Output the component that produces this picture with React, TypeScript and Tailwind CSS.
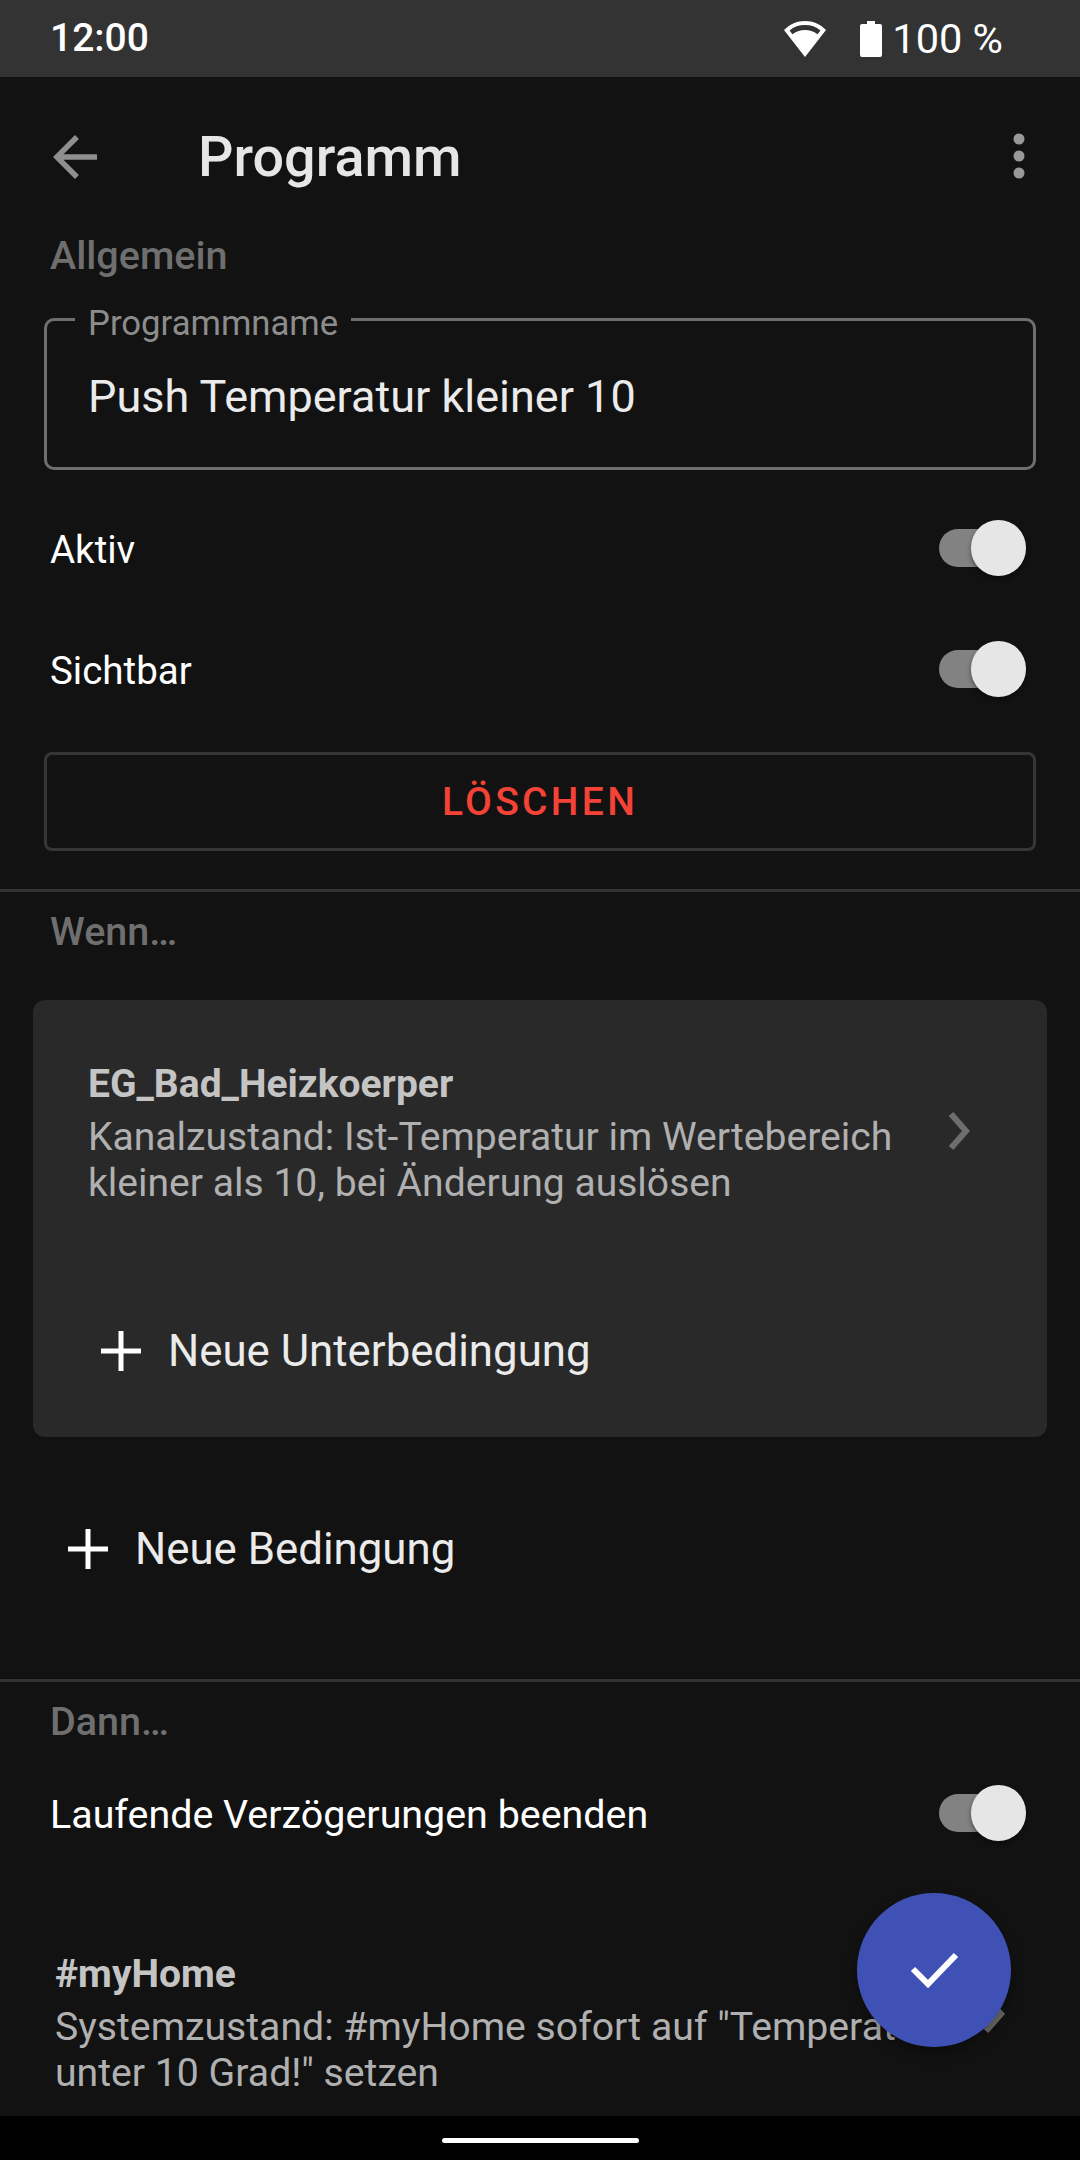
const Toggle = () => (
  <div className="relative w-[88px] h-[56px] shrink-0">
    <div className="absolute left-0 right-[2px] top-[9px] h-[38px] rounded-full bg-[#828282]" />
    <div className="absolute right-[1px] top-0 w-[55px] h-[56px] rounded-full bg-[#e6e6e6] shadow-[0_3px_5px_rgba(0,0,0,0.4)]" />
  </div>
)

const PlusIcon = () => (
  <svg width="42" height="42" viewBox="0 0 42 42" fill="#ffffff">
    <path d="M18.500 1h5v17.500H41v5H23.500V41h-5V23.500H1v-5h17.500z" />
  </svg>
)

const Chevron = ({ className }: { className: string }) => (
  <svg className={className} width="22" height="38" viewBox="0 0 22 38" fill="none" stroke="#6e6e6e" strokeWidth="6">
    <path d="M3 2l15 17L3 36" />
  </svg>
)

const Divider = () => <div className="h-[3px] bg-[#333333]" />

const SectionTitle = ({ children }: { children: string }) => (
  <div className="px-[50px] text-[39.5px] leading-[44px] font-medium text-[#6f6f6f]">{children}</div>
)

export default function App() {
  return (
    <div className="relative flex flex-col w-[1080px] h-[2160px] overflow-hidden bg-[#121212] font-['Roboto',sans-serif]">
      {/* status bar */}
      <div className="flex items-center h-[77px] pl-[50px] pr-[77px] bg-[#333333] text-white text-[39px] leading-[77px] shrink-0">
        <span className="font-medium">12:00</span>
        <svg className="ml-auto" width="42" height="36" viewBox="0 0 42 36" fill="#ffffff">
          <path fillRule="evenodd" d="M21 0C13 0 6 3 0 9l21 27L42 9C36 3 29 0 21 0zM5.500 9.500C10 5.800 15 4 21 4s11 1.800 15.500 5.500l-3 3.700C29.500 10.400 25.500 9 21 9s-8.500 1.400-12.500 4.200z" />
        </svg>
        <svg className="ml-[34px]" width="22" height="36" viewBox="0 0 22 36" fill="#ffffff">
          <path d="M7 0h8v3h5a2 2 0 0 1 2 2v29a2 2 0 0 1-2 2H2a2 2 0 0 1-2-2V5a2 2 0 0 1 2-2h5z" />
        </svg>
        <span className="ml-[10px] text-[41.5px]">100 %</span>
      </div>

      <div className="flex-1 min-h-0 overflow-hidden">
        {/* toolbar */}
        <div className="flex items-center h-[88px] mt-[36px] pl-[42px] pr-[55px]">
          <svg width="66" height="66" viewBox="0 0 24 24" fill="#8f8f8f">
            <path d="M20 11H7.830l5.590-5.590L12 4l-8 8 8 8 1.410-1.410L7.830 13H20v-2z" />
          </svg>
          <span className="ml-[90px] text-[55.7px] leading-[70px] font-medium text-[#e6e6e6]">Programm</span>
          <svg className="ml-auto -mt-[2px]" width="12" height="46" viewBox="0 0 12 46" fill="#999999">
            <circle cx="6" cy="6" r="5.500" />
            <circle cx="6" cy="23" r="5.500" />
            <circle cx="6" cy="40" r="5.500" />
          </svg>
        </div>

        <div className="mt-[33px]">
          <SectionTitle>Allgemein</SectionTitle>
        </div>

        {/* name field */}
        <div className="relative mx-[44px] mt-[40px] h-[152px] rounded-[10px] border-[3px] border-[#6f6f6f] pl-[41px] pt-[51px]">
          <div className="absolute left-[28px] -top-[18px] px-[13px] bg-[#121212] text-[34.7px] leading-[40px] text-[#8c8c8c]">
            Programmname
          </div>
          <div className="text-[45px] leading-[50px] text-[#ebebeb]">Push Temperatur kleiner 10</div>
        </div>

        <div className="flex items-center justify-between h-[56px] mt-[50px] pl-[50px] pr-[53px] text-[38.5px] text-white">
          <span className="mt-[3px]">Aktiv</span>
          <Toggle />
        </div>
        <div className="flex items-center justify-between h-[56px] mt-[65px] pl-[50px] pr-[53px] text-[38.5px] text-white">
          <span className="mt-[3px]">Sichtbar</span>
          <Toggle />
        </div>

        <div className="flex items-center justify-center mx-[44px] mt-[55px] h-[99px] rounded-[8px] border-[3px] border-[#363636] pt-[2px] text-[39px] font-medium tracking-[3.3px] text-[#f44336]">
          LÖSCHEN
        </div>

        <div className="mt-[38px]">
          <Divider />
        </div>
        <div className="mt-[18px]">
          <SectionTitle>Wenn…</SectionTitle>
        </div>

        {/* condition card */}
        <div className="mx-[33px] mt-[46px] h-[437px] rounded-[12px] bg-[#292929] pl-[55px] pr-[77px]">
          <div className="flex items-center justify-between pt-[61px]">
            <div>
              <div className="text-[39px] leading-[46px] font-bold text-[#c4c4c4]">EG_Bad_Heizkoerper</div>
              <div className="mt-[7px] text-[39.1px] leading-[46px] text-[#b0b0b0]">
                Kanalzustand: Ist-Temperatur im Wertebereich
                <br />
                kleiner als 10, bei Änderung auslösen
              </div>
            </div>
            <Chevron className="-mt-[6px]" />
          </div>
          <div className="flex items-center gap-[26px] mt-[120px] pl-[12px] text-[43.8px] leading-[50px] text-[#ebebeb]">
            <PlusIcon />
            <span>Neue Unterbedingung</span>
          </div>
        </div>

        <div className="flex items-center gap-[26px] mt-[87px] pl-[67px] text-[43.8px] leading-[50px] text-[#ebebeb]">
          <PlusIcon />
          <span>Neue Bedingung</span>
        </div>

        <div className="mt-[105px]">
          <Divider />
        </div>
        <div className="mt-[18px]">
          <SectionTitle>Dann…</SectionTitle>
        </div>

        <div className="flex items-center justify-between h-[56px] mt-[41px] pl-[50px] pr-[53px] text-[39.4px] text-white">
          <span className="mt-[3px]">Laufende Verzögerungen beenden</span>
          <Toggle />
        </div>

        <div className="relative mt-[110px] pl-[55px]">
          <div className="text-[39px] leading-[46px] font-bold text-[#c4c4c4]">#myHome</div>
          <div className="mt-[7px] whitespace-nowrap text-[39.2px] leading-[46px] text-[#b0b0b0]">
            Systemzustand: #myHome sofort auf "Temperatur
            <br />
            unter 10 Grad!" setzen
          </div>
          <Chevron className="absolute left-[983px] top-[44px]" />
        </div>
      </div>

      {/* nav bar */}
      <div className="flex items-center justify-center h-[44px] shrink-0 bg-black">
        <div className="w-[197px] h-[5px] mt-[4px] rounded-full bg-white" />
      </div>

      {/* save fab */}
      <div className="absolute left-[857px] top-[1893px] flex items-center justify-center w-[154px] h-[154px] rounded-full bg-[#3f51b5] shadow-[0_6px_14px_rgba(0,0,0,0.35)]">
        <svg className="ml-[1px] mt-[2px]" width="50" height="40" viewBox="0 0 50 40" fill="none" stroke="#ffffff" strokeWidth="6">
          <path d="M3 18l15 15L46 4" />
        </svg>
      </div>
    </div>
  )
}
